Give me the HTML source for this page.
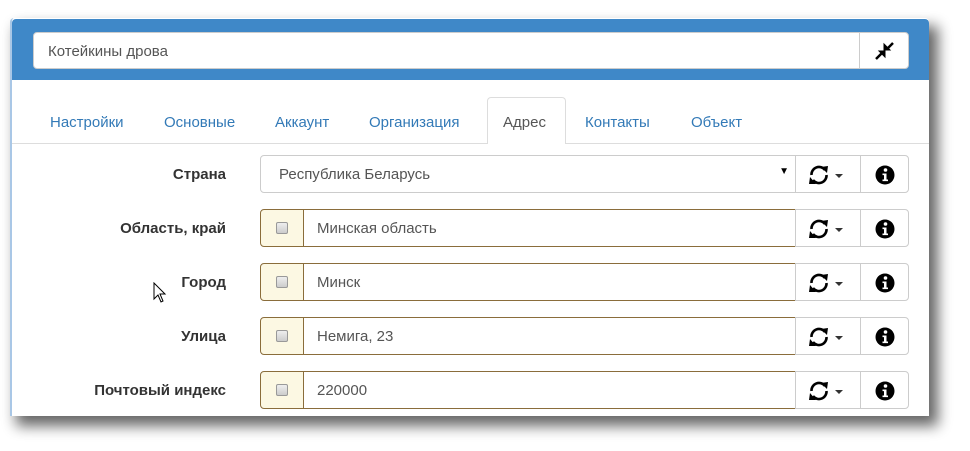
<!DOCTYPE html>
<html><head><meta charset="utf-8"><style>
*{box-sizing:border-box;margin:0;padding:0}
body{width:970px;height:451px;background:#fff;font-family:"Liberation Sans",Arial,sans-serif;font-size:15px;color:#555;position:relative;overflow:hidden}
.shadow{position:absolute;left:16px;top:26px;width:922px;height:400px;background:#000;filter:blur(7px);opacity:.6}
.panel{position:absolute;left:10px;top:18px;width:919px;height:398px;background:#fff;border-left:2px solid #a9c7e6;overflow:hidden;border-radius:4px 4px 0 0}
.head{position:absolute;left:0;top:1px;width:100%;height:61px;background:#3f88c8;border-radius:4px 4px 0 0}
.title{position:absolute;left:21px;top:13px;width:876px;height:37px;background:#fff;border-radius:4px;border:1px solid #ccc}
.title span{position:absolute;left:14px;top:10px;font-size:15px;color:#555}
.title .btn{position:absolute;right:0;top:0;width:49px;height:35px;border-left:1px solid #ccc}
.tabs{position:absolute;left:0;top:125px;width:100%;border-bottom:1px solid #ddd}
.tab{position:absolute;top:-29px;color:#337ab7;font-size:15px}
.act{position:absolute;left:475px;top:-46px;width:79px;height:47px;background:#fff;border:1px solid #ddd;border-bottom:none;border-radius:4px 4px 0 0}
.lbl{position:absolute;font-weight:bold;color:#333;font-size:15px}
.grp{position:absolute;width:650px;height:38px}
.sel{position:absolute;left:0;top:0;width:536px;height:38px;border:1px solid #ccc;border-radius:4px 0 0 4px;padding:10px 18px;color:#555}
.cb{position:absolute;left:0;top:0;width:44px;height:38px;background:#fcf8e3;border:1px solid #8a6d3b;border-radius:4px 0 0 4px}
.cb i{position:absolute;left:15px;top:12px;width:12px;height:12px;border:1px solid #999;border-radius:2px;background:linear-gradient(#eee,#ccc)}
.inp{position:absolute;left:43px;top:0;width:493px;height:38px;border:1px solid #8a6d3b;padding:10px 13px;color:#555}
.b1{position:absolute;left:535px;top:0;width:66px;height:38px;border:1px solid #ccc}
.b2{position:absolute;left:600px;top:0;width:49px;height:38px;border:1px solid #ccc;border-radius:0 4px 4px 0}
.b1 svg{position:absolute;left:12px;top:8px}
.b2 svg{position:absolute;left:14px;top:9px}
</style></head><body>
<div class="shadow"></div>
<div class="panel">
<div class="head"><div class="title"><span>Котейкины дрова</span><div class="btn"><svg width="49" height="35" viewBox="0 0 49 35"><g fill="#000" stroke="#000" stroke-width="2.5"><path d="M16 26 L22 20"/><path d="M19 18 L25 18 L25 24 Z" stroke-width="1"/><path d="M33 10 L27 16"/><path d="M24 11 L24 17 L30 17 Z" stroke-width="1"/></g></svg></div></div></div>
<div class="tabs">
<div class="act"></div>
<span class="tab" style="left:38px">Настройки</span>
<span class="tab" style="left:152px">Основные</span>
<span class="tab" style="left:263px">Аккаунт</span>
<span class="tab" style="left:357px">Организация</span>
<span class="tab" style="left:491px;color:#555">Адрес</span>
<span class="tab" style="left:573px">Контакты</span>
<span class="tab" style="left:679px">Объект</span>
</div>
</div>
<div id="rows"></div>
<script>
var rows=[["Страна","Республика Беларусь",1],["Область, край","Минская область"],["Город","Минск"],["Улица","Немига, 23"],["Почтовый индекс","220000"]];
var h="";
rows.forEach(function(r,i){var t=155+54*i;
h+='<div class="lbl" style="top:'+(t+11)+'px;right:744px">'+r[0]+'</div><div class="grp" style="top:'+t+'px;left:260px">';
if(r[2])h+='<div class="sel">'+r[1]+'<span style="position:absolute;right:6px;top:10px;font-size:10px;color:#000">▼</span></div>';
else h+='<div class="cb"><i></i></div><div class="inp">'+r[1]+'</div>';
h+='<div class="b1"><svg width="40" height="22" viewBox="0 0 40 22"><path d="M17 6 A7.5 7.5 0 0 0 3.5 11" fill="none" stroke="#000" stroke-width="2.6"/><path d="M5 16 A7.5 7.5 0 0 0 18.5 11" fill="none" stroke="#000" stroke-width="2.6"/><path d="M13 3 L20 2 L19 9 Z M1 20 L8 20 L2 13 Z" fill="#000"/><path d="M27 10 L35 10 L31 14 Z" fill="#333"/></svg></div><div class="b2"><svg width="20" height="20" viewBox="0 0 20 20"><circle cx="10" cy="10" r="9.5" fill="#000"/><circle cx="10.5" cy="5" r="1.8" fill="#fff"/><path d="M7.5 8.5h4v6h1.5v1.6h-5.5v-1.6h1.5v-4.4h-1.5z" fill="#fff"/></svg></div></div>';});
document.getElementById("rows").innerHTML=h;
</script>
<svg style="position:absolute;left:153px;top:282px" width="14" height="22" viewBox="0 0 14 22"><path d="M1 1 L1 17 L5 13 L8 20 L10 19 L7 12 L12 12 Z" fill="#fff" stroke="#000" stroke-width="1"/></svg>
</body></html>
